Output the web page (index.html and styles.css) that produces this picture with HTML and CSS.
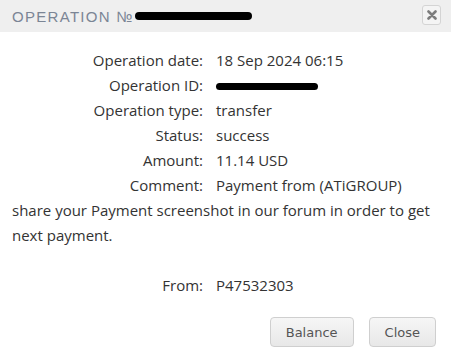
FILE: index.html
```html
<!DOCTYPE html>
<html lang="en">
<head>
    <meta charset="UTF-8">
    <meta name="viewport" content="width=device-width, initial-scale=1.0">
    <title>Operation</title>
    <link rel="stylesheet" href="styles.css">
</head>
<body>

<div class="dialog">
    <div class="dialog-header">
        <span class="dialog-title">OPERATION №<span class="redact redact-title"></span></span>
        <button class="close-x" aria-label="Close">
            <svg width="10" height="10" viewBox="0 0 10 10">
                <path d="M1.5 1.5 L8.5 8.5 M8.5 1.5 L1.5 8.5" stroke="#7d7d7d" stroke-width="2.6" stroke-linecap="round"/>
            </svg>
        </button>
    </div>

    <div class="dialog-body">
        <div class="details">
            <div class="label">Operation date:</div>
            <div class="value">18 Sep 2024 06:15</div>
            <div class="label">Operation ID:</div>
            <div class="value"><span class="redact redact-id"></span></div>
            <div class="label">Operation type:</div>
            <div class="value">transfer</div>
            <div class="label">Status:</div>
            <div class="value">success</div>
            <div class="label">Amount:</div>
            <div class="value">11.14 USD</div>
            <div class="label">Comment:</div>
            <div class="value">Payment from (ATiGROUP)</div>
        </div>
        <p class="comment-text">share your Payment screenshot in our forum in order to get next payment.</p>
        <div class="details from-row">
            <div class="label">From:</div>
            <div class="value">P47532303</div>
        </div>
    </div>

    <div class="dialog-buttons">
        <button class="btn">Balance</button>
        <button class="btn">Close</button>
    </div>
</div>

</body>
</html>
```

FILE: styles.css
```css
:root {
    --header-bg: #efefef;
    --title-color: #7b8595;
    --text-color: #333333;
    --btn-border: #cfcfcf;
}

body {
    margin: 0;
    background: #ffffff;
    font-family: 'Open Sans', Arial, sans-serif;
    color: var(--text-color);
}

.dialog {
    width: 451px;
}

.dialog-header {
    height: 32px;
    background: var(--header-bg);
    display: flex;
    align-items: center;
    justify-content: space-between;
    padding: 0 10px 0 12px;
    box-sizing: border-box;
}

.dialog-title {
    font-family: 'Liberation Sans', Arial, sans-serif;
    font-size: 15px;
    letter-spacing: 1.3px;
    color: var(--title-color);
    display: flex;
    align-items: center;
}

.redact {
    display: inline-block;
    background: #000;
    border-radius: 4px;
}

.redact-title {
    width: 117px;
    height: 8px;
    margin-left: 1px;
}

.redact-id {
    width: 102px;
    height: 7px;
    vertical-align: middle;
}

.close-x {
    width: 19px;
    height: 20px;
    margin-top: -2px;
    padding: 0;
    border: 1px solid #d4d4d4;
    border-radius: 3px;
    background: #f4f4f4;
    display: flex;
    align-items: center;
    justify-content: center;
}

.dialog-body {
    padding: 16px 0 0 12px;
    font-size: 15px;
    line-height: 25px;
}

.details {
    display: grid;
    grid-template-columns: 191px auto;
    column-gap: 13px;
}

.label {
    text-align: right;
}

.comment-text {
    margin: 0;
    width: 420px;
}

.from-row {
    margin-top: 25px;
}

.dialog-buttons {
    display: flex;
    justify-content: flex-end;
    gap: 15px;
    padding: 19px 15px 0 0;
}

.btn {
    height: 30px;
    padding: 0 15px;
    font-family: 'DejaVu Sans', Verdana, sans-serif;
    font-size: 13px;
    color: #555;
    background: linear-gradient(#f6f6f6, #e8e8e8);
    border: 1px solid var(--btn-border);
    border-radius: 4px;
}
```
